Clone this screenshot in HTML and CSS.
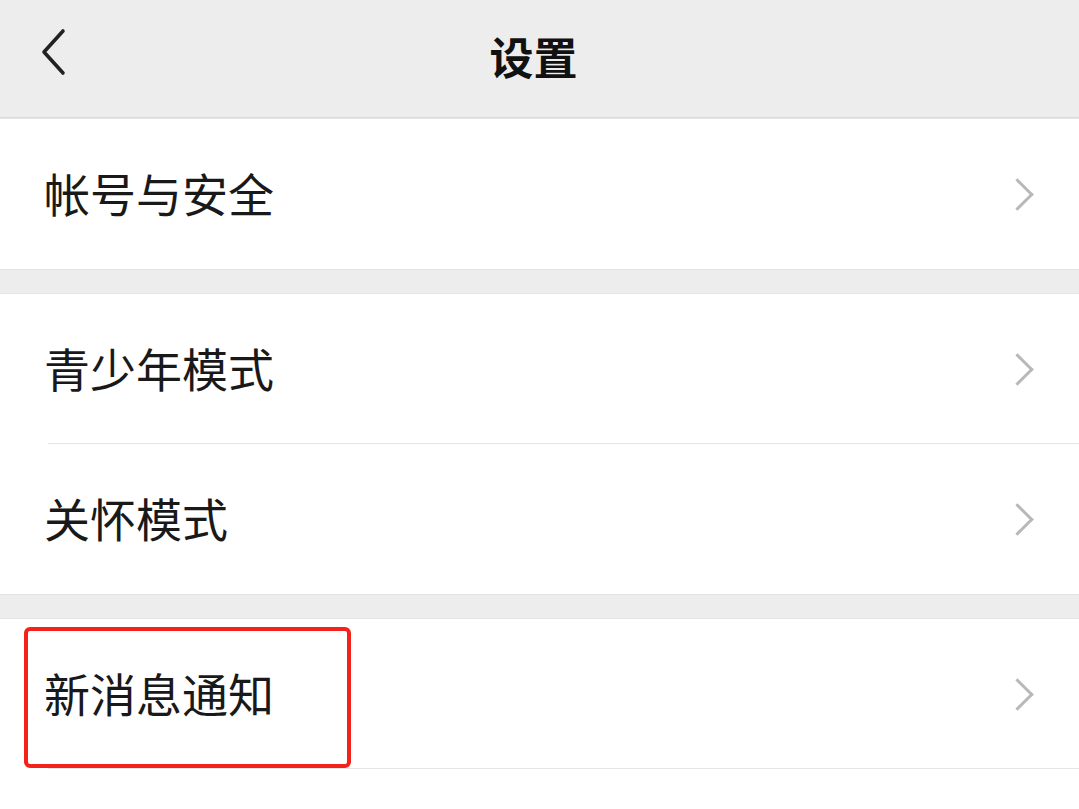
FILE: index.html
```html
<!DOCTYPE html>
<html lang="zh-CN">
<head>
    <meta charset="UTF-8">
    <meta name="viewport" content="width=device-width, initial-scale=1.0">
    <title>设置</title>
    <link rel="stylesheet" href="styles.css">
</head>
<body>
    <div class="nav-bar">
        <span class="back-btn">
            <svg width="26" height="50" viewBox="0 0 26 50">
                <path d="M23 3 L4 24 L23 45" fill="none" stroke="#222" stroke-width="3.6" stroke-linecap="round" stroke-linejoin="round"/>
            </svg>
        </span>
        <h1 class="nav-title">设置</h1>
    </div>

    <div class="group">
        <div class="cell">
            <span class="cell-label">帐号与安全</span>
            <span class="arrow"></span>
        </div>
    </div>

    <div class="group">
        <div class="cell divided">
            <span class="cell-label">青少年模式</span>
            <span class="arrow"></span>
        </div>
        <div class="cell">
            <span class="cell-label">关怀模式</span>
            <span class="arrow"></span>
        </div>
    </div>

    <div class="group">
        <div class="cell divided highlighted">
            <span class="cell-label">新消息通知</span>
            <span class="arrow"></span>
            <!-- annotation box -->
            <div class="mark-box"></div>
        </div>
        <div class="cell empty"></div>
    </div>
</body>
</html>
```

FILE: styles.css
```css
body {
    margin: 0;
    padding: 0;
    background-color: #ededed;
    font-family: "Noto Sans CJK SC", "Noto Sans", sans-serif;
    color: #191919;
    overflow: hidden;
    height: 809px;
}

.nav-bar {
    height: 117px;
    border-bottom: 1px solid #d9d9d9;
    background-color: #ededed;
    display: flex;
    align-items: center;
    justify-content: center;
    position: relative;
}

.back-btn {
    position: absolute;
    left: 40px;
    top: 28px;
    display: flex;
}

.nav-title {
    margin: 0 0 6px -12px;
    font-size: 44px;
    font-weight: 700;
    line-height: 1;
    color: #111;
}

.group {
    background-color: #fff;
    border-bottom: 1px solid #e2e2e2;
    border-top: 1px solid #e6e6e6;
    margin-bottom: 23px;
}

.group:first-of-type {
    border-top: none;
}

.group:last-child {
    margin-bottom: 0;
    border-bottom: none;
}

.cell {
    height: 150px;
    display: flex;
    align-items: center;
    justify-content: space-between;
    padding: 0 46px 0 44px;
    position: relative;
    box-sizing: border-box;
}

.cell.divided::after {
    content: "";
    position: absolute;
    left: 48px;
    right: 0;
    bottom: 0;
    height: 1px;
    background-color: #e5e5e5;
}

.cell-label {
    font-size: 46px;
    line-height: 1;
    margin-top: -4px;
}

.arrow {
    width: 20px;
    height: 20px;
    border-top: 3px solid #b8b8b8;
    border-right: 3px solid #b8b8b8;
    transform: rotate(45deg);
    margin-right: 4px;
}

.cell.empty {
    height: 60px;
}

.mark-box {
    position: absolute;
    left: 24px;
    top: 8px;
    width: 327px;
    height: 141px;
    box-sizing: border-box;
    border: 4px solid #f3231c;
    border-radius: 6px;
}
```
